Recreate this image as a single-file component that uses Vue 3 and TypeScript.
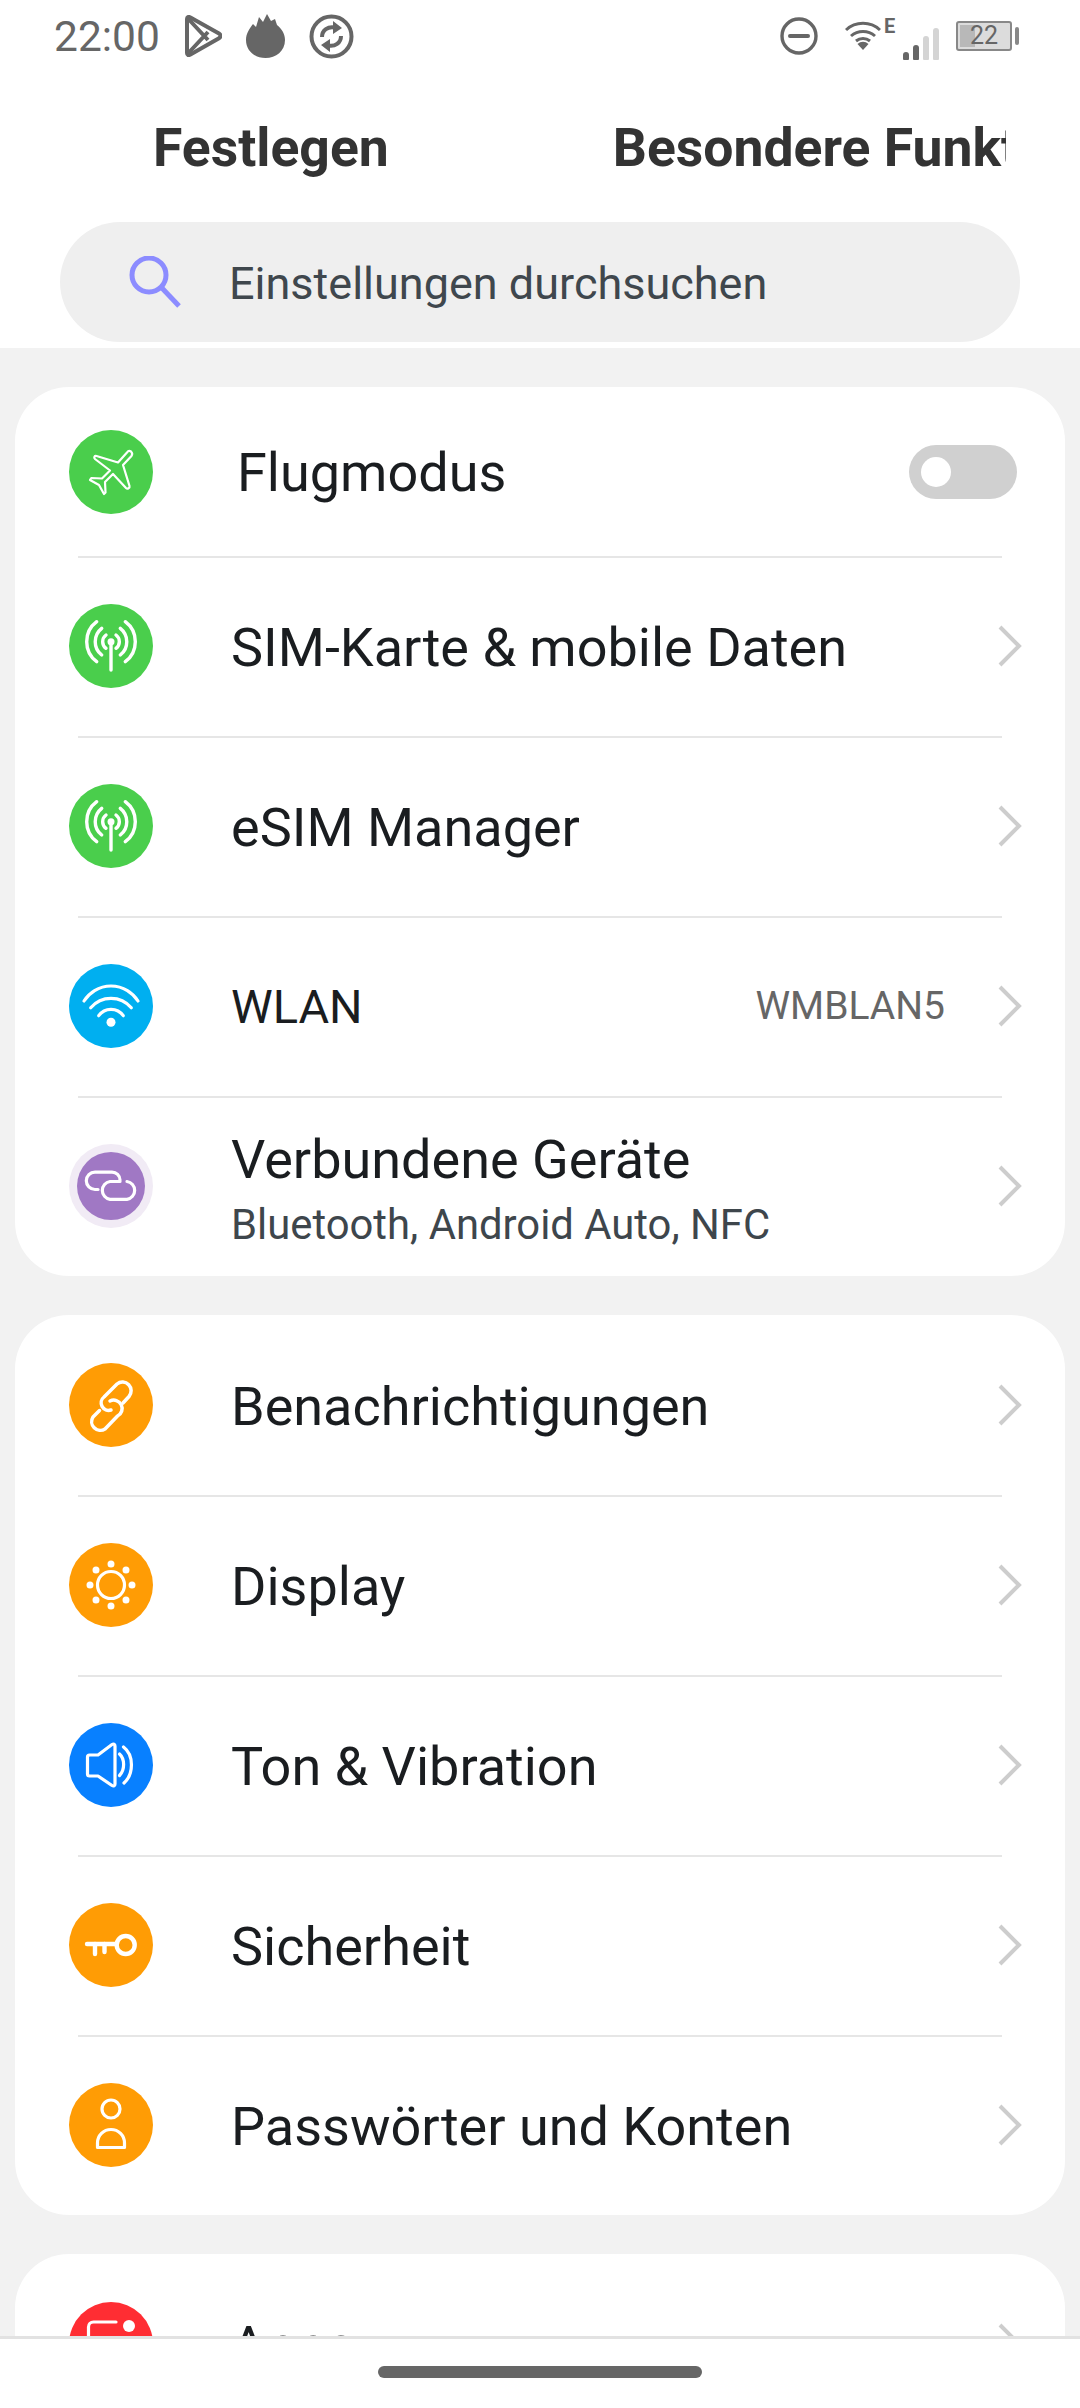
<script setup lang="ts">
interface Row {
  label: string
  color: string
  strokes: string[]
  dots?: string
  dotSize?: number
  sub?: string
  value?: string
  toggle?: boolean
  halo?: boolean
  weight?: number
  small?: boolean
}

const antenna = [
  'M42 38V66',
  'M37 31A8.3 8.3 0 0 0 37 44.3',
  'M47 31A8.3 8.3 0 0 1 47 44.3',
  'M32.7 24.3A17 17 0 0 0 32.7 51',
  'M51.3 24.3A17 17 0 0 1 51.3 51',
  'M27.7 17.7A25 25 0 0 0 27.7 57.7',
  'M56.3 17.7A25 25 0 0 1 56.3 57.7',
]

const groups: Row[][] = [
  [
    {
      label: 'Flugmodus',
      color: '#4ace4c',
      toggle: true,
      weight: 2.2,
      strokes: [
        'M62 21.5C63.5 23 63.5 24.5 62.5 26L54 35L60.5 56C61 58 58.5 59.5 57 58L44 44L36 52L36.5 62.5L35 64L30 55L21 50L22.5 48L33 48.5L41 40.5L26 29C24.5 27.5 25.5 25.5 27.5 26L49 32.5L58 22.5C59 21 60.5 20.5 62 21.5Z',
      ],
    },
    { label: 'SIM-Karte & mobile Daten', color: '#4ace4c', weight: 3.4, strokes: antenna, dots: 'M42 37.7h0' },
    { label: 'eSIM Manager', color: '#4ace4c', weight: 3.4, strokes: antenna, dots: 'M42 37.7h0' },
    {
      label: 'WLAN',
      value: 'WMBLAN5',
      small: true,
      color: '#00aff0',
      strokes: [
        'M15 37A31.8 31.8 0 0 1 69 37',
        'M21.7 43.7A26.6 26.6 0 0 1 62.3 43.7',
        'M29.7 51.7A15 15 0 0 1 54.3 51.7',
      ],
      dots: 'M42 58.3h0',
      dotSize: 9,
    },
    {
      label: 'Verbundene Geräte',
      sub: 'Bluetooth, Android Auto, NFC',
      color: '#a078c4',
      halo: true,
      strokes: [
        'M29 45.5H26A8.7 8.7 0 0 1 26 28.1H43A8 8 0 0 1 51 36',
        'M58 37.5A9 9 0 0 1 58 55.3H41A9 9 0 0 1 41 37.5H51',
      ],
    },
  ],
  [
    {
      label: 'Benachrichtigungen',
      color: '#ff9c05',
      weight: 3.5,
      strokes: [
        'M54 40L60 33.5A8.7 8.7 0 0 0 48 21L35 34A7.5 7.5 0 0 0 42 47',
        'M30.5 47.5L24 54A8.7 8.7 0 0 0 36 66L48.5 53A7.5 7.5 0 0 0 41 38',
      ],
    },
    {
      label: 'Display',
      color: '#ff9c05',
      strokes: ['M42 28.5A13.5 13.5 0 1 1 42 55.5A13.5 13.5 0 1 1 42 28.5Z'],
      dots: 'M42 21h0M42 63h0M21 42h0M63 42h0M27 27h0M57 27h0M27 57h0M57 57h0',
    },
    {
      label: 'Ton & Vibration',
      color: '#0880ff',
      strokes: [
        'M20.5 32H29L43 21.5C44.5 20.5 46 21 46 23V61C46 63 44.5 63.5 43 62.5L29 53H20.5C19 53 18.5 52 18.5 51V34C18.5 33 19 32 20.5 32Z',
        'M50.5 31C56 36 56 47 50.5 52.5',
        'M54.5 24C65 32 65 51 55 60',
      ],
    },
    {
      label: 'Sicherheit',
      color: '#ff9c05',
      weight: 4.4,
      strokes: [
        'M18 41H47',
        'M26 41V51',
        'M35.5 41V49',
        'M56.7 33A9 9 0 1 1 56.7 51A9 9 0 1 1 56.7 33Z',
      ],
    },
    {
      label: 'Passwörter und Konten',
      color: '#ff9c05',
      strokes: [
        'M42 17A9 9 0 1 1 42 35A9 9 0 1 1 42 17Z',
        'M28.5 64.5V60A13.5 13.5 0 0 1 55.5 60V64.5Z',
      ],
    },
  ],
  [
    {
      label: 'Apps',
      color: '#ff2d33',
      strokes: ['M19.5 40V25A5 5 0 0 1 24.5 20H47', 'M19.5 40V60A5 5 0 0 0 24.5 65H60A5 5 0 0 0 65 60V36'],
      dots: 'M60 24h0',
      dotSize: 12,
    },
  ],
]
</script>

<template>
  <div class="screen">
    <header class="top">
      <div class="status">
        <span class="time">22:00</span>
        <svg class="st-play" viewBox="0 0 38 42" width="38" height="42" fill="none" stroke="#666" stroke-width="4" stroke-linejoin="round">
          <path d="M3 4C3 2 4.5 1.5 6 2.2L35 18.5C37 19.7 37 22 35 23.2L6 39.8C4.5 40.5 3 40 3 38Z" />
          <path d="M3.5 3L24 25M3.5 39L24 17" />
        </svg>
        <svg class="st-fire" viewBox="0 0 39 44" width="39" height="44">
          <path fill="#666" d="M19.5 44C9 44 0 37 0 26C0 19 4 14 7 10L10 13L13 3L17 8L21 0L25 7L29 5L31 11C36 15 39 20 39 26C39 37 30 44 19.5 44Z" />
        </svg>
        <svg class="st-sync" viewBox="0 0 45 45" width="45" height="45" fill="none" stroke="#666" stroke-width="4">
          <circle cx="22.5" cy="22.5" r="20" />
          <path stroke-width="4" d="M13 23C13 16 19 12 26 13.5M32 22C32 29 26 33 19 31.5" />
          <path fill="#666" stroke="none" d="M24 7L33 14L24 20ZM21 25L12 31L21 38Z" />
        </svg>
        <span class="status-gap"></span>
        <svg class="st-dnd" viewBox="0 0 38 38" width="38" height="38" fill="none" stroke="#666" stroke-width="3.4">
          <circle cx="19" cy="19" r="17" />
          <path stroke-linecap="round" stroke-width="4" d="M10 19H28" />
        </svg>
        <svg class="st-wifi" viewBox="0 0 36 30" width="36" height="30" fill="none" stroke="#666" stroke-width="3">
          <path d="M1 9A25 25 0 0 1 35 9" />
          <path d="M6 15A18 18 0 0 1 30 15" />
          <path d="M11 20A11 11 0 0 1 25 20" />
          <path fill="#666" stroke="none" d="M12.5 23A8 8 0 0 1 23.5 23L18 29Z" />
        </svg>
        <span class="st-e">E</span>
        <div class="st-signal">
          <i class="on b1"></i>
          <i class="on b2"></i>
          <i class="b3"></i>
          <i class="b4"></i>
        </div>
        <div class="st-battery">
          <div class="level"></div>
          <span>22</span>
        </div>
        <i class="st-tip"></i>
      </div>

      <nav class="tabs">
        <span class="tab">Festlegen</span>
        <span class="tab">Besondere Funktionen</span>
      </nav>

      <div class="search">
        <svg viewBox="0 0 52 52" width="52" height="52" fill="none" stroke="#8c8cff" stroke-width="5">
          <circle cx="20" cy="19" r="17" />
          <path d="M32 31L50 50" />
        </svg>
        <span>Einstellungen durchsuchen</span>
      </div>
    </header>

    <main class="list">
      <section v-for="(group, g) in groups" :key="g" class="card">
        <template v-for="(row, r) in group" :key="row.label">
          <div v-if="r > 0" class="divider"></div>
          <div class="row" :class="{ short: row.toggle }">
            <svg class="icon" viewBox="0 0 84 84" width="84" height="84" fill="none">
              <circle v-if="row.halo" cx="42" cy="42" r="42" fill="#f1ebf5" />
              <circle cx="42" cy="42" :r="row.halo ? 34 : 42" :fill="row.color" />
              <g stroke="#fff" :stroke-width="row.weight ?? 3.2" stroke-linecap="round" stroke-linejoin="round">
                <path v-for="d in row.strokes" :key="d" :d="d" />
                <path v-if="row.dots" :d="row.dots" :stroke-width="row.dotSize ?? 7" />
              </g>
            </svg>
            <div class="text">
              <div class="label" :class="{ small: row.small }">{{ row.label }}</div>
              <div v-if="row.sub" class="sub">{{ row.sub }}</div>
            </div>
            <span v-if="row.value" class="value">{{ row.value }}</span>
            <div v-if="row.toggle" class="switch"><i></i></div>
            <svg v-else class="chevron" viewBox="0 0 24 42" width="24" height="42" fill="none" stroke="#cdcdcd" stroke-width="4">
              <path d="M2 2L21 21L2 40" />
            </svg>
          </div>
        </template>
      </section>
    </main>

    <footer class="nav">
      <div class="handle"></div>
    </footer>
  </div>
</template>

<style scoped>
.screen {
  width: 1080px;
  height: 2408px;
  display: flex;
  flex-direction: column;
  overflow: hidden;
  background: #f2f2f2;
  font-family: Roboto, 'Noto Sans', sans-serif;
}

.top {
  flex: none;
  height: 348px;
  background: #fff;
}

.status {
  height: 72px;
  display: flex;
  align-items: center;
  padding-left: 54px;
  color: #666;
}
.time {
  font-size: 42.5px;
  width: 106px;
}
.st-play {
  margin-left: 24px;
}
.st-fire {
  margin-left: 24px;
}
.st-sync {
  margin-left: 24px;
}
.status-gap {
  flex: 1;
}
.st-wifi {
  margin-left: 27px;
}
.st-e {
  align-self: flex-start;
  margin: 14px 0 0 3px;
  font-size: 20px;
  font-weight: 700;
  width: 15px;
}
.st-signal {
  display: flex;
  align-items: flex-end;
  gap: 4px;
  height: 32px;
  margin: 16px 0 0 4px;
}
.st-signal i {
  width: 6px;
  border-radius: 3px 3px 1px 1px;
  background: #d4d4d4;
}
.st-signal .on {
  background: #666;
}
.b1 { height: 8px; }
.b2 { height: 15px; }
.b3 { height: 24px; }
.b4 { height: 32px; }
.st-battery {
  position: relative;
  width: 56px;
  height: 30px;
  margin-left: 17px;
  box-sizing: border-box;
  border: 2px solid #888;
  border-radius: 3px;
  background: #dcdcdc;
  text-align: center;
  font-size: 25px;
  line-height: 26px;
  color: #666;
}
.level {
  position: absolute;
  left: 2px;
  top: 2px;
  bottom: 2px;
  width: 15px;
  background: #b8b8b8;
}
.st-battery span {
  position: relative;
}
.st-tip {
  width: 4px;
  height: 18px;
  margin: 0 61px 0 3px;
  border-radius: 2px;
  background: #888;
}

.tabs {
  display: flex;
  height: 150px;
  margin: 0 74px 0 153px;
  overflow: hidden;
  white-space: nowrap;
  align-items: center;
  gap: 224px;
}
.tab {
  font-size: 53.5px;
  font-weight: 700;
  color: #333;
}

.search {
  height: 120px;
  margin: 0 60px;
  border-radius: 60px;
  background: #efefef;
  display: flex;
  align-items: center;
  padding-left: 69px;
  gap: 48px;
  font-size: 45px;
  color: #3f474d;
}
.search svg {
  flex: none;
}
.search span {
  padding-top: 2px;
}

.list {
  flex: 1;
  min-height: 0;
  overflow: hidden;
  display: flex;
  flex-direction: column;
  gap: 39px;
  padding: 39px 15px 0;
}
.card {
  flex: none;
  background: #fff;
  border-radius: 54px;
}
.divider {
  position: relative;
  height: 2px;
  margin: 0 63px -2px;
  background: #e6e6e6;
}
.row {
  height: 180px;
  display: flex;
  align-items: center;
  padding: 0 43px 0 54px;
}
.row.short {
  height: 169px;
}
.row.short .text {
  margin-left: 84px;
}
.icon {
  flex: none;
}
.text {
  flex: 1;
  margin: 3px 0 0 78px;
}
.label {
  font-size: 54px;
  line-height: 60px;
  color: #1a1d20;
}
.label.small {
  font-size: 47px;
  margin-top: -2px;
}
.sub {
  font-size: 41.8px;
  line-height: 48px;
  margin-top: 11px;
  margin-bottom: -3px;
  color: #3e464c;
}
.value {
  font-size: 39px;
  color: #666;
  margin-right: 53px;
}
.chevron {
  flex: none;
}
.switch {
  width: 108px;
  height: 54px;
  margin-right: 5px;
  border-radius: 27px;
  background: #d0d0d0;
  display: flex;
  align-items: center;
  padding-left: 12px;
  box-sizing: border-box;
}
.switch i {
  width: 30px;
  height: 30px;
  border-radius: 50%;
  background: #fff;
}

.nav {
  flex: none;
  height: 72px;
  box-sizing: border-box;
  border-top: 3px solid #e2e2e2;
  background: #fff;
  display: flex;
  justify-content: center;
  padding-top: 27px;
}
.handle {
  width: 324px;
  height: 12px;
  border-radius: 6px;
  background: #666;
}
</style>
